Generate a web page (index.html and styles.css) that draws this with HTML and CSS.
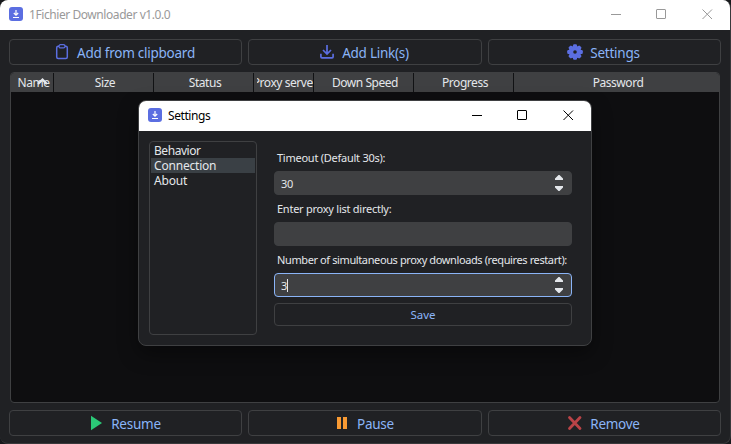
FILE: index.html
```html
<!DOCTYPE html>
<html lang="en">
<head>
<meta charset="utf-8">
<title>1Fichier Downloader v1.0.0</title>
<link rel="stylesheet" href="styles.css">
</head>
<body>
<div class="window">
  <header class="titlebar">
    <svg class="app-icon" viewBox="0 0 14 14"><rect width="14" height="14" rx="3" fill="#5b6ee1"/><path d="M7 3v5M4.800 6L7 8.200 9.200 6M4 10.500h6" fill="none" stroke="#fff" stroke-width="1.200"/></svg>
    <span class="title">1Fichier Downloader v1.0.0</span>
    <svg class="controls" viewBox="0 0 138 30"><path d="M16 14.500h10" stroke="currentColor"/><rect x="61.500" y="9.500" width="9" height="9" rx=".5" fill="none" stroke="currentColor"/><path d="M107.500 9.500l9.500 9.500M117 9.500l-9.500 9.500" fill="none" stroke="currentColor"/></svg>
  </header>
  <main class="content">
    <div class="toolbar">
      <button class="btn"><svg class="icon" viewBox="0 0 16 16"><rect x="2.700" y="2.200" width="10.600" height="12.200" rx="1.500" fill="none" stroke="#5b6ee1" stroke-width="1.500"/><rect x="5" y=".7" width="6" height="3.200" rx="1.500" fill="#202124" stroke="#5b6ee1" stroke-width="1.300"/></svg><span>Add from clipboard</span></button>
      <button class="btn"><svg class="icon" viewBox="0 0 16 16"><path d="M8 1v8.500M4 6l4 4 4-4M1.900 9.800v3q0 1 1 1h10.200q1 0 1-1v-3" fill="none" stroke="#5b6ee1" stroke-width="1.700"/></svg><span>Add Link(s)</span></button>
      <button class="btn"><svg class="icon" viewBox="0 0 16 16"><g fill="#5b6ee1"><circle cx="8" cy="8" r="6.300"/><rect x="6" y=".2" width="4" height="15.600" rx="1.200"/><rect x="6" y=".2" width="4" height="15.600" rx="1.200" transform="rotate(45 8 8)"/><rect x="6" y=".2" width="4" height="15.600" rx="1.200" transform="rotate(90 8 8)"/><rect x="6" y=".2" width="4" height="15.600" rx="1.200" transform="rotate(135 8 8)"/></g><circle cx="8" cy="8" r="1.800" fill="#202124"/></svg><span>Settings</span></button>
    </div>
    <section class="table">
      <div class="head">
        <div class="th">Name<svg class="sort" viewBox="0 0 11 7"><path d="M1 6l4.500-4.300L10 6" fill="none" stroke="#e4e7eb" stroke-width="2.300"/></svg></div>
        <div class="th">Size</div>
        <div class="th">Status</div>
        <div class="th"><div class="clip"><span>Proxy server</span></div></div>
        <div class="th">Down Speed</div>
        <div class="th">Progress</div>
        <div class="th">Password</div>
      </div>
    </section>
    <div class="toolbar">
      <button class="btn"><svg class="icon" viewBox="0 0 16 16"><path d="M3 .8l11 7.200-11 7.200z" fill="#2bc877"/></svg><span>Resume</span></button>
      <button class="btn"><svg class="icon" viewBox="0 0 16 16"><path d="M3 2h4v12H3zM9 2h4v12H9z" fill="#f89a33"/></svg><span>Pause</span></button>
      <button class="btn"><svg class="icon" viewBox="0 0 16 16"><path d="M2.500 2.500l10.500 11M13 2.500l-10.500 11" stroke="#b94347" stroke-width="2.800" stroke-linecap="round"/></svg><span>Remove</span></button>
    </div>
  </main>
</div>
<div class="dialog">
  <header class="titlebar">
    <svg class="app-icon" viewBox="0 0 14 14"><rect width="14" height="14" rx="3" fill="#5b6ee1"/><path d="M7 3v5M4.800 6L7 8.200 9.200 6M4 10.500h6" fill="none" stroke="#fff" stroke-width="1.200"/></svg>
    <span class="title">Settings</span>
    <svg class="controls" viewBox="0 0 138 30"><path d="M16 14.500h10" stroke="currentColor"/><rect x="61.500" y="9.500" width="9" height="9" rx=".5" fill="none" stroke="currentColor"/><path d="M107.500 9.500l9.500 9.500M117 9.500l-9.500 9.500" fill="none" stroke="currentColor"/></svg>
  </header>
  <div class="dialog-body">
    <ul class="nav"><li class="behavior">Behavior</li><li class="selected">Connection</li><li>About</li></ul>
    <form class="form">
      <div class="label">Timeout (Default 30s):</div>
      <div class="field">30<svg class="spin" viewBox="0 0 8 16"><path d="M3.500 0h1L8 3.500V5H0V3.500zM0 11h8v1.500L4.500 16h-1L0 12.500z" fill="#e4e7eb"/></svg></div>
      <div class="label">Enter proxy list directly:</div>
      <div class="field"></div>
      <div class="label long">Number of simultaneous proxy downloads (requires restart):</div>
      <div class="field focus">3<i class="caret"></i><svg class="spin" viewBox="0 0 8 16"><path d="M3.500 0h1L8 3.500V5H0V3.500zM0 11h8v1.500L4.500 16h-1L0 12.500z" fill="#e4e7eb"/></svg></div>
      <button type="button" class="btn save">Save</button>
    </form>
  </div>
</div>
</body>
</html>
```
FILE: styles.css
```css
* { box-sizing: border-box; }
body { margin: 0; width: 731px; height: 444px; overflow: hidden; background: #17191c; font: 12px "Noto Sans", sans-serif; color: #e4e7eb; }
button { margin: 0; padding: 0; font: inherit; }
svg { display: block; flex: none; }
.window { width: 731px; height: 444px; border: solid #38393b; border-width: 0 1px 1px 0; border-radius: 8px; overflow: hidden; background: #202124; display: flex; flex-direction: column; }
.titlebar { height: 30px; flex: none; background: #fff; color: #999; display: flex; align-items: center; padding-left: 9px; }
.app-icon { width: 14px; height: 14px; margin-top: -2px; }
.title { margin-left: 6px; flex: 1; line-height: 16px; white-space: nowrap; font-size: 12px; letter-spacing: -.43px; }
.controls { width: 138px; height: 30px; margin-right: -3px; }
.content { flex: 1; padding: 9px 9px 7px; display: flex; flex-direction: column; }
.toolbar { display: grid; grid-template-columns: 233px 234px 233px; gap: 6px; flex: none; }
.btn { height: 26px; border: 1px solid #3f4042; border-radius: 4px; background: transparent; color: #8ab4f7; font-size: 13.5px; letter-spacing: -.25px; line-height: 20px; display: flex; align-items: center; justify-content: center; gap: 7px; white-space: nowrap; }
.toolbar .btn { padding-right: 2px; }
.btn span { padding-top: 2px; }
.icon { width: 16px; height: 16px; }
.table { flex: 1; margin: 7px 0 7px 1px; width: 710px; border: 1px solid #3f4042; border-radius: 4px; background: #0e0e10; overflow: hidden; }
.head { display: grid; grid-template-columns: 43px 100px 100px 60px 100px 100px 1fr; height: 19px; background: #3f4042; font-size: 12px; letter-spacing: -.45px; }
.th { position: relative; border-right: 1px solid #111214; display: flex; align-items: center; justify-content: center; white-space: nowrap; padding: 0 0 0 3px; line-height: 19px; }
.th:last-child { border: 0; }
.clip { width: 56px; display: flex; justify-content: center; overflow: hidden; }
.sort { position: absolute; left: 26px; top: 5px; width: 11px; height: 7px; }
.dialog { position: absolute; left: 138px; top: 100px; width: 454px; height: 246px; background: #202124; border: 1px solid #3f4042; border-radius: 8px; overflow: hidden; box-shadow: 0 8px 20px rgba(0,0,0,.4); }
.dialog .titlebar { color: #000; }
.dialog-body { display: flex; padding: 10px; height: 214px; gap: 17px; }
.nav { list-style: none; margin: 0; padding: 1px; width: 108px; height: 194px; border: 1px solid #3f4042; border-radius: 4px; }
.nav li { height: 15px; line-height: 15px; padding-left: 3px; letter-spacing: -.2px; }
.nav .behavior { letter-spacing: -.45px; }
.nav .selected { background: #3a4045; }
.form { width: 298px; padding-top: 9px; }
.label { height: 16px; margin-bottom: 5px; padding-left: 3px; line-height: 16px; font-size: 11px; letter-spacing: -.25px; white-space: nowrap; }
.label.long { letter-spacing: -.39px; }
.field { position: relative; height: 24px; margin-bottom: 6px; border: 1px solid #3f4042; border-radius: 4px; background: #3f4042; padding-left: 6px; display: flex; align-items: center; font-size: 11px; letter-spacing: -.3px; }
.focus { border-color: #8ab4f7; }
.caret { width: 1px; height: 13px; background: #e4e7eb; }
.spin { position: absolute; right: 8px; top: 3px; width: 8px; height: 16px; }
.btn.save { width: 100%; height: 23px; font-size: 11.5px; letter-spacing: 0; }
```
